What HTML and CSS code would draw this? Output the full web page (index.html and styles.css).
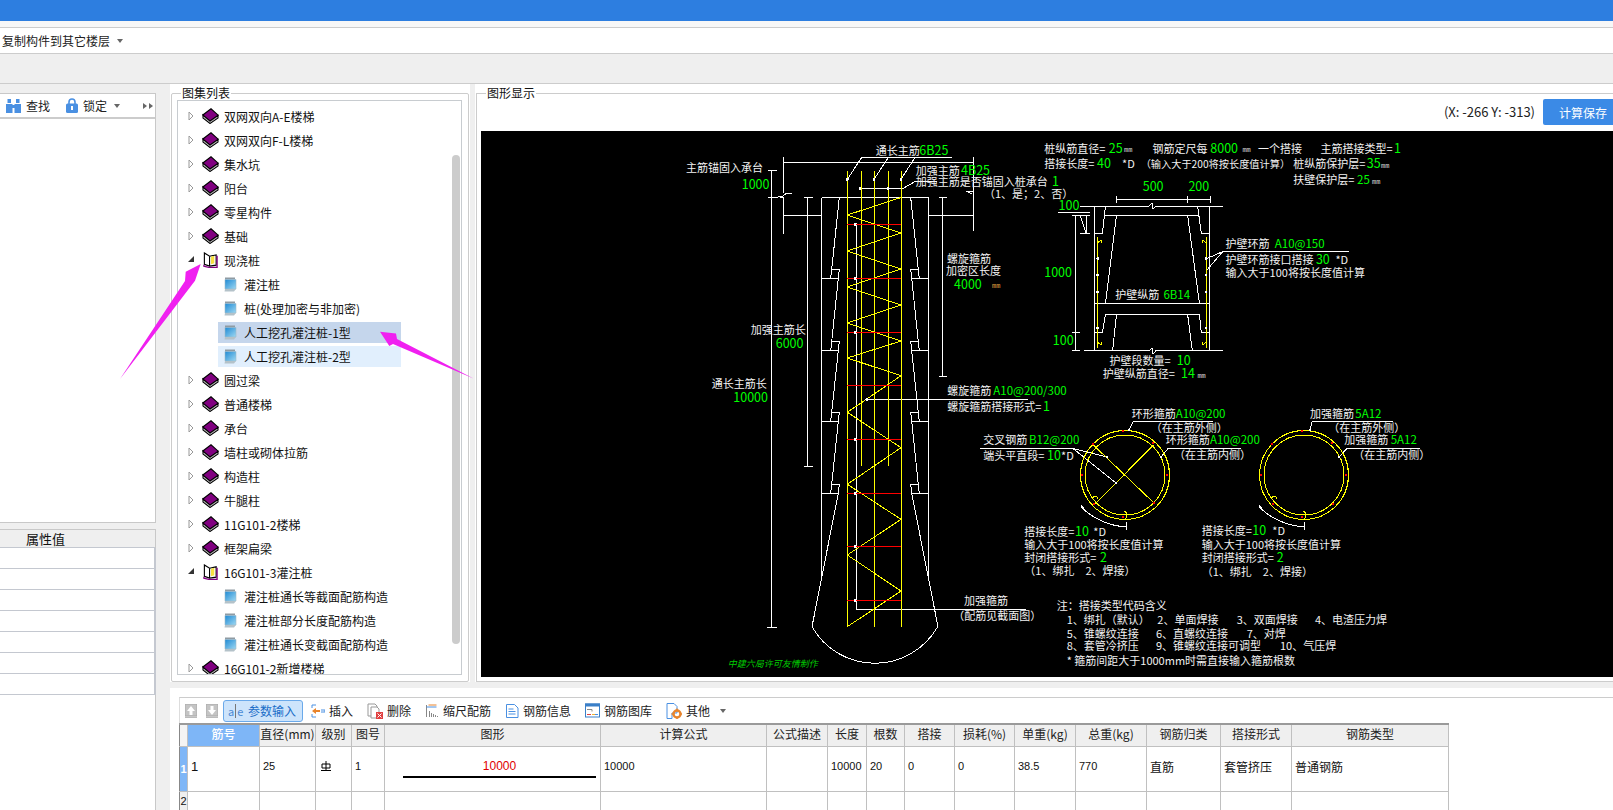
FILE: index.html
```html
<!DOCTYPE html>
<html lang="zh">
<head>
<meta charset="utf-8">
<title>图集</title>
<link rel="stylesheet" href="styles.css">
</head>
<body>
<svg class="defs" width="0" height="0">
  <defs>
    <symbol id="book" viewBox="0 0 17 16">
      <path d="M1 7V10L8 15.500 16 10V7.500L8 13z" fill="#fff" stroke="#000" stroke-width="1.100"/>
      <path d="M.8 7 9 .8l7.200 6.400L8 13z" fill="#800080" stroke="#000" stroke-width="1.100"/>
      <path d="M2.500 9.500 8 14 14.500 9.500" fill="none" stroke="#777" stroke-width=".7"/>
    </symbol>
    <symbol id="openbook" viewBox="0 0 16 17">
      <path d="M1.500 13V1l5.500 3.500L14 3v11l-7 1z" fill="#fff" stroke="#000" stroke-width="1.200"/>
      <path d="M7 4.500V15" stroke="#000" stroke-width="1.200"/>
      <path d="M8.500 5l3.500-1v8l-3.500 1z" fill="#f6e040"/>
      <path d="M1 13.500V15l6 1.500h8V4" fill="none" stroke="#800080" stroke-width="1.400"/>
    </symbol>
    <linearGradient id="noteg" x1="0" y1="0" x2="1" y2="1">
      <stop offset="0" stop-color="#1f8ad4"/>
      <stop offset="1" stop-color="#9ed8f2"/>
    </linearGradient>
    <symbol id="note" viewBox="0 0 13 15">
      <path d="M1 .500h10v2H1z" fill="#8f9ba3"/>
      <path d="M1 2.500h11v9.500H1z" fill="url(#noteg)" stroke="#9fb8c8" stroke-width=".6"/>
      <path d="M1 12l-.5 2.500H10l2-2.500z" fill="#b4c2c9"/>
    </symbol>
  </defs>
</svg>

<div class="titlebar"></div>
<div class="strip"></div>
<div class="toolbar-a">
  <span class="tb-text">复制构件到其它楼层</span><i class="caret"></i>
</div>
<div class="toolbar-b"></div>

<div class="main">
  <aside class="left">
    <section class="left-top">
      <div class="left-tools">
        <svg class="ic15" viewBox="0 0 15 15"><path d="M0 6h6.500v9H0zM8.500 6H15v9H8.500zM1.500 1h3.500v4H1.500zM10 1h3.500v4H10zM6 7h3v3H6z" fill="#4a90e2"/></svg>
        <span class="lt-find">查找</span>
        <svg class="ic-lock" viewBox="0 0 12 15"><path d="M3 6V4a3 3 0 0 1 6 0v2" fill="none" stroke="#4a90e2" stroke-width="1.600"/><rect y="5.500" width="12" height="9.500" rx="1.500" fill="#4a90e2"/><rect x="5" y="8" width="2" height="4" fill="#fff"/></svg>
        <span class="lt-lock">锁定</span><i class="caret caret-l"></i>
        <span class="lt-more"><i class="mini"></i><i class="mini"></i></span>
      </div>
    </section>
    <section class="left-bottom">
      <div class="prop-head"><span>属性值</span></div>
      <div class="prop-rows">
        <div class="prop-row"></div><div class="prop-row"></div><div class="prop-row"></div><div class="prop-row"></div>
        <div class="prop-row"></div><div class="prop-row"></div><div class="prop-row"></div>
      </div>
    </section>
  </aside>

  <div class="work">
    <div class="upper">
      <div class="tree-panel">
        <div class="group">
          <span class="legend">图集列表</span>
          <div class="tree">
            <div class="row"><svg class="tw"><path d="M1 1l4 4-4 4z"/></svg><svg class="bk"><use href="#book"/></svg><span>双网双向A-E楼梯</span></div>
            <div class="row"><svg class="tw"><path d="M1 1l4 4-4 4z"/></svg><svg class="bk"><use href="#book"/></svg><span>双网双向F-L楼梯</span></div>
            <div class="row"><svg class="tw"><path d="M1 1l4 4-4 4z"/></svg><svg class="bk"><use href="#book"/></svg><span>集水坑</span></div>
            <div class="row"><svg class="tw"><path d="M1 1l4 4-4 4z"/></svg><svg class="bk"><use href="#book"/></svg><span>阳台</span></div>
            <div class="row"><svg class="tw"><path d="M1 1l4 4-4 4z"/></svg><svg class="bk"><use href="#book"/></svg><span>零星构件</span></div>
            <div class="row"><svg class="tw"><path d="M1 1l4 4-4 4z"/></svg><svg class="bk"><use href="#book"/></svg><span>基础</span></div>
            <div class="row"><svg class="tw tw-open"><path d="M0 7h6V1z"/></svg><svg class="bk"><use href="#openbook"/></svg><span>现浇桩</span></div>
            <div class="child"><div class="child-in"><svg class="nt"><use href="#note"/></svg><span>灌注桩</span></div></div>
            <div class="child"><div class="child-in"><svg class="nt"><use href="#note"/></svg><span>桩(处理加密与非加密)</span></div></div>
            <div class="child"><div class="child-in sel"><svg class="nt"><use href="#note"/></svg><span>人工挖孔灌注桩-1型</span></div></div>
            <div class="child"><div class="child-in sel2"><svg class="nt"><use href="#note"/></svg><span>人工挖孔灌注桩-2型</span></div></div>
            <div class="row"><svg class="tw"><path d="M1 1l4 4-4 4z"/></svg><svg class="bk"><use href="#book"/></svg><span>圆过梁</span></div>
            <div class="row"><svg class="tw"><path d="M1 1l4 4-4 4z"/></svg><svg class="bk"><use href="#book"/></svg><span>普通楼梯</span></div>
            <div class="row"><svg class="tw"><path d="M1 1l4 4-4 4z"/></svg><svg class="bk"><use href="#book"/></svg><span>承台</span></div>
            <div class="row"><svg class="tw"><path d="M1 1l4 4-4 4z"/></svg><svg class="bk"><use href="#book"/></svg><span>墙柱或砌体拉筋</span></div>
            <div class="row"><svg class="tw"><path d="M1 1l4 4-4 4z"/></svg><svg class="bk"><use href="#book"/></svg><span>构造柱</span></div>
            <div class="row"><svg class="tw"><path d="M1 1l4 4-4 4z"/></svg><svg class="bk"><use href="#book"/></svg><span>牛腿柱</span></div>
            <div class="row"><svg class="tw"><path d="M1 1l4 4-4 4z"/></svg><svg class="bk"><use href="#book"/></svg><span>11G101-2楼梯</span></div>
            <div class="row"><svg class="tw"><path d="M1 1l4 4-4 4z"/></svg><svg class="bk"><use href="#book"/></svg><span>框架扁梁</span></div>
            <div class="row"><svg class="tw tw-open"><path d="M0 7h6V1z"/></svg><svg class="bk"><use href="#openbook"/></svg><span>16G101-3灌注桩</span></div>
            <div class="child"><div class="child-in"><svg class="nt"><use href="#note"/></svg><span>灌注桩通长等截面配筋构造</span></div></div>
            <div class="child"><div class="child-in"><svg class="nt"><use href="#note"/></svg><span>灌注桩部分长度配筋构造</span></div></div>
            <div class="child"><div class="child-in"><svg class="nt"><use href="#note"/></svg><span>灌注桩通长变截面配筋构造</span></div></div>
            <div class="row"><svg class="tw"><path d="M1 1l4 4-4 4z"/></svg><svg class="bk"><use href="#book"/></svg><span>16G101-2新增楼梯</span></div>
            <div class="scroll"></div>
          </div>
        </div>
      </div>

      <div class="draw-panel">
        <div class="group-r">
          <span class="legend">图形显示</span>
          <div class="draw-head">
            <span class="coords">(X: -266 Y: -313)</span>
            <button class="save">计算保存</button>
          </div>
          <svg class="cad" width="1132" height="546" viewBox="481 131 1132 546">
            <!-- pile, white structure -->
            <g id="pileL" class="w">
              <path d="M839.300 197.500 831.700 269.300H839.300L838.300 278.300H830.700L831.700 269.300M821.500 278.300H830.700"/>
              <path d="M838.300 278.300 831.700 341.500H839.300L838.300 350.700H830.700L831.700 341.500M821.500 350.700H830.700"/>
              <path d="M838.300 350.700 831.700 412.300H839.300L838.300 421.300H830.700L831.700 412.300M821.500 421.300H830.700"/>
              <path d="M838.300 421.300 831.700 484.300H839.300L838.300 493.300H830.700L831.700 484.300M821.500 493.300H830.700"/>
              <path d="M838.300 493.300 812 626.700"/>
            </g>
            <use href="#pileL" transform="translate(1750 0) scale(-1 1)"/>
            <g class="w">
              <path d="M812 626.700A72.300 72.300 0 0 0 937.700 626.700"/>
              <path d="M821.500 197.500H928.500M821.500 197.500V577M928.500 197.500V577"/>
              <path d="M783 157V193M783 197V234M973 157V193M973 197V231M783 162.500H973M783 215.500H821.500M928.500 215.500H973"/>
              <path d="M771.700 170V627.300M768 170.500H777M768 197.500H778M767 627.500H777M807.700 197V466M804 197.500H813M804 466.500H813M942.700 197V376M939 197.500H947M939 376.500H947"/>
              <path d="M778 196H783L787 193H792M783 198L778 196M966 191H973V197M966 191L972 194"/>
              <path d="M856.700 223V609.500H1026"/>
              <path d="M861.700 157.500H951.700M861.700 157.500 847.300 179.300M888.300 157.500 874 179.300M915 157.500 901 179.300"/>
              <path d="M860 188.500H903L915 181.500H937M888 188.500V188"/>
              <path d="M866.700 399.500H1028M980 448.500H1073M1133.300 421.700H1213.300M1133.300 421.700 1129 430M1168 448.500H1241M1168 448.500 1161 457M1073 448.500 1107 457M1073 448.500 1116 483"/>
              <path d="M1312 421.700H1393M1312 421.700 1310 430M1347 448.500H1420M1347 448.500 1339 457"/>
              <path d="M1081 507Q1100 525 1126 527M1126 522V530M1259 507Q1278 525 1304 527M1304 522V530M1081 505 1084 509M1259 505 1262 509"/>
              <path d="M1080 206H1149L1152 203 1153 209 1156 206H1222.800M1084 350.700H1149L1152 348 1153 354 1156 350.700H1222.800"/>
              <path d="M1104.800 215H1199.400M1094.600 206V350.700M1209.500 206V350.700"/>
              <path d="M1105.500 206 1102.400 233.300H1094.600M1197.600 206 1201.300 233.300H1209.500"/>
              <path d="M1116.500 215 1105.500 303.300M1187.600 215 1199.400 303.300M1094.600 303.300H1209.500M1104.800 314.300H1199.400"/>
              <path d="M1105.500 314.300 1102.400 332.300H1094.600M1116.500 314.300 1112.600 350.700M1187.600 314.300 1192.300 350.700M1199.400 314.300 1201.300 332.300H1209.500"/>
              <path d="M1075 215V350.700M1072 215.500H1090M1072 332.500H1080M1072 350.700H1080M1057.500 212.500H1090M1080 215 1086 233.300M1086 215V233.500M1080 233.500H1090"/>
              <path d="M1116 199.500H1210M1116 196V203M1187.300 196V203M1210 196V203"/>
              <path d="M1222.800 251.500H1349M1222.800 251.500 1207 258.500M1222.800 251.500 1207 270"/>
            </g>
            <!-- reinforcement -->
            <g class="y">
              <path d="M847.300 171V626.700M861.300 171V465.700M874.300 171V626.700M888.300 171V465.700M901 171V626.700"/>
              <path d="M901 197.500 847.300 215 901 233 847.300 251 901 269 847.300 287 901 305 847.300 323 901 341 847.300 358 901 375.700 847.300 412.300 901 447.700 847.300 484.300 901 519.300 847.300 555 901 591 847.300 626.700"/>
              <circle cx="1125" cy="475" r="44.500"/><circle cx="1125" cy="475" r="40"/>
              <path d="M1093.300 445 1154.300 503.300M1153.300 445 1095 504.300"/>
              <circle cx="1304" cy="475" r="44.500"/><circle cx="1304" cy="475" r="40"/>
              <path d="M1092 498q5-4 6 1M1124 511q5 2 1 9M1271 498q5-4 6 1M1303 511q5 2 1 9"/>
              <path d="M1097.700 236.700V347.700M1206 236.700V347.700M1097.700 243q4-5 4 0M1206 243q-4-5-4 0M1097.700 342q4 5 4 0M1206 342q-4 5-4 0"/>
            </g>
            <path class="r" d="M847 224.500H901M847 278.500H901M847 332.500H901M847 385.500H901M847 439.500H901M847 493.500H901M847 546.500H901M847 600.500H901"/>
            <g class="dw">
              <circle cx="855" cy="224.500" r="1.300"/><circle cx="855" cy="278.500" r="1.300"/><circle cx="855" cy="332.500" r="1.300"/><circle cx="855" cy="439.500" r="1.300"/><circle cx="855" cy="493.500" r="1.300"/><circle cx="855" cy="546.500" r="1.300"/><circle cx="855" cy="600.500" r="1.300"/>
              <circle cx="847.300" cy="179.300" r="1.500"/><circle cx="874" cy="179.300" r="1.500"/><circle cx="901" cy="179.300" r="1.500"/><circle cx="860" cy="188.500" r="1.300"/><circle cx="888" cy="188.500" r="1.300"/><circle cx="866.700" cy="399.500" r="1.500"/>
              <circle cx="1129" cy="430" r="1.400"/><circle cx="1161" cy="457" r="1.400"/><circle cx="1107" cy="457" r="1.400"/><circle cx="1116" cy="483" r="1.400"/><circle cx="1310" cy="430" r="1.400"/><circle cx="1339" cy="457" r="1.400"/>
              <circle cx="1097.700" cy="258.500" r="1.400"/><circle cx="1097.700" cy="275" r="1.400"/><circle cx="1097.700" cy="292" r="1.400"/><circle cx="1097.700" cy="328" r="1.400"/><circle cx="1206" cy="258.500" r="1.400"/><circle cx="1206" cy="275" r="1.400"/><circle cx="1206" cy="292" r="1.400"/><circle cx="1206" cy="328" r="1.400"/>
            </g>
            <g class="dr">
              <circle cx="1123" cy="431" r="1.500"/><circle cx="1153" cy="443" r="1.500"/><circle cx="1167" cy="475" r="1.500"/><circle cx="1154" cy="503" r="1.500"/><circle cx="1123" cy="517" r="1.500"/><circle cx="1094" cy="504" r="1.500"/><circle cx="1082" cy="475" r="1.500"/><circle cx="1093" cy="444" r="1.500"/>
              <circle cx="1302" cy="431" r="1.500"/><circle cx="1332" cy="443" r="1.500"/><circle cx="1346" cy="475" r="1.500"/><circle cx="1333" cy="504" r="1.500"/><circle cx="1302" cy="517" r="1.500"/><circle cx="1273" cy="504" r="1.500"/><circle cx="1261" cy="475" r="1.500"/><circle cx="1272" cy="444" r="1.500"/>
            </g>
            <!-- labels -->
            <g class="t">
              <text x="686" y="172">主筋锚固入承台</text>
              <text x="875.700" y="155">通长主筋</text>
              <text x="915.700" y="174.700">加强主筋</text>
              <text x="915.700" y="186">加强主筋是否锚固入桩承台</text>
              <text x="984" y="198">（1、是；2、否）</text>
              <text x="947" y="263">螺旋箍筋</text>
              <text x="946" y="274.500">加密区长度</text>
              <text x="750.700" y="334">加强主筋长</text>
              <text x="711.700" y="387.500">通长主筋长</text>
              <text x="947.300" y="395">螺旋箍筋</text>
              <text x="947.300" y="411">螺旋箍筋搭接形式=</text>
              <text x="983.300" y="444">交叉钢筋</text>
              <text x="983.300" y="460">端头平直段=</text>
              <text x="1061" y="460">*D</text>
              <text x="1131.700" y="417.700">环形箍筋</text>
              <text x="1150.700" y="431.700">（在主筋外侧）</text>
              <text x="1165.700" y="444.300">环形箍筋</text>
              <text x="1174" y="459">（在主筋内侧）</text>
              <text x="1024.300" y="536">搭接长度=</text>
              <text x="1093.300" y="536">*D</text>
              <text x="1024.300" y="548.700">输入大于100将按长度值计算</text>
              <text x="1024.300" y="562.300">封闭搭接形式=</text>
              <text x="1024.300" y="575">（1、绑扎　2、焊接）</text>
              <text x="1310" y="417.700">加强箍筋</text>
              <text x="1328.300" y="431.700">（在主筋外侧）</text>
              <text x="1344.300" y="444.300">加强箍筋</text>
              <text x="1353.300" y="459">（在主筋内侧）</text>
              <text x="1201.700" y="535">搭接长度=</text>
              <text x="1272.300" y="535">*D</text>
              <text x="1201.700" y="548.700">输入大于100将按长度值计算</text>
              <text x="1201.700" y="562.300">封闭搭接形式=</text>
              <text x="1201.700" y="576">（1、绑扎　2、焊接）</text>
              <text x="964" y="605">加强箍筋</text>
              <text x="953.300" y="620">（配筋见截面图）</text>
              <text x="1056.700" y="610">注：搭接类型代码含义</text>
              <text x="1066.700" y="624">1、绑扎（默认）</text>
              <text x="1157.300" y="624">2、单面焊接</text>
              <text x="1236.700" y="624">3、双面焊接</text>
              <text x="1315" y="624">4、电渣压力焊</text>
              <text x="1066.700" y="638.300">5、锥螺纹连接</text>
              <text x="1156" y="638.300">6、直螺纹连接</text>
              <text x="1246.700" y="638.300">7、对焊</text>
              <text x="1066.700" y="650">8、套管冷挤压</text>
              <text x="1156" y="650">9、锥螺纹连接可调型</text>
              <text x="1280" y="650">10、气压焊</text>
              <text x="1066.700" y="665">* 箍筋间距大于1000mm时需直接输入箍筋根数</text>
              <text x="1044.200" y="152.700">桩纵筋直径=</text>
              <text x="1152.500" y="152.700">钢筋定尺每</text>
              <text x="1258" y="152.700">一个搭接</text>
              <text x="1320.600" y="152.700">主筋搭接类型=</text>
              <text x="1044.200" y="168.300">搭接长度=</text>
              <text x="1122" y="168.300">*D</text>
              <text class="tight" x="1140.700" y="168.300">（输入大于200将按长度值计算）</text>
              <text x="1293.200" y="168.300">桩纵筋保护层=</text>
              <text x="1293.200" y="184.300">扶壁保护层=</text>
              <text x="1225.600" y="248.300">护壁环筋</text>
              <text x="1225.600" y="264">护壁环筋接口搭接</text>
              <text x="1335.400" y="264">*D</text>
              <text x="1225.600" y="276.700">输入大于100将按长度值计算</text>
              <text x="1115.300" y="299">护壁纵筋</text>
              <text x="1109.500" y="365">护壁段数量=</text>
              <text x="1102.800" y="378.300">护壁纵筋直径=</text>
            </g>
            <g class="g">
              <text x="741.700" y="189">1000</text>
              <text x="919.300" y="155">6B25</text>
              <text x="961" y="174.700">4B25</text>
              <text x="1052" y="185.700">1</text>
              <text x="954" y="289">4000</text>
              <text x="775.700" y="347.700">6000</text>
              <text x="733.300" y="401.700">10000</text>
              <text class="gs" x="993.300" y="395">A10@200/300</text>
              <text x="1043" y="411">1</text>
              <text class="gs" x="1029" y="444">B12@200</text>
              <text x="1047" y="460">10</text>
              <text class="gs" x="1175.700" y="417.700">A10@200</text>
              <text class="gs" x="1210" y="444.300">A10@200</text>
              <text x="1075" y="536">10</text>
              <text x="1100" y="562.300">2</text>
              <text class="gs" x="1355.300" y="417.700">5A12</text>
              <text class="gs" x="1390.700" y="444.300">5A12</text>
              <text x="1252.300" y="535">10</text>
              <text x="1276.700" y="562.300">2</text>
              <text x="1108.700" y="152.700">25</text>
              <text x="1210.300" y="152.700">8000</text>
              <text x="1394" y="152.700">1</text>
              <text x="1097" y="168.300">40</text>
              <text x="1366.700" y="168.300">35</text>
              <text class="gs" x="1357" y="184.300">25</text>
              <text x="1142.700" y="191">500</text>
              <text x="1188.400" y="191">200</text>
              <text x="1058.600" y="210">100</text>
              <text x="1044.200" y="276.700">1000</text>
              <text x="1052.800" y="345">100</text>
              <text class="gs" x="1274.800" y="248.300">A10@150</text>
              <text x="1315.900" y="264">30</text>
              <text class="gs" x="1163.400" y="299">6B14</text>
              <text x="1176.700" y="365">10</text>
              <text x="1181" y="378.300">14</text>
            </g>
            <g class="m">
              <text class="tan" x="992" y="288">mm</text>
              <text x="1124" y="152">mm</text>
              <text x="1242.400" y="152">mm</text>
              <text x="1381" y="168">mm</text>
              <text x="1372" y="184">mm</text>
              <text x="1197.400" y="378">mm</text>
            </g>
            <text class="credit" x="727.700" y="666.700">中建六局许可友情制作</text>
          </svg>
        </div>
      </div>
    </div>

    <div class="lower">
      <div class="bar">
        <span class="nav"><svg class="ic12" viewBox="0 0 12 14"><rect width="12" height="12" fill="#c4c4c4" stroke="#aaa"/><path d="M6 2 2 7h2.500v4h3V7H10z" fill="#fff"/><rect y="12.500" width="12" height="1.500" fill="#bbb"/></svg></span>
        <span class="nav"><svg class="ic12" viewBox="0 0 12 14"><rect width="12" height="12" fill="#c4c4c4" stroke="#aaa"/><path d="M6 11 2 6h2.500V2h3v4H10z" fill="#fff"/><rect y="12.500" width="12" height="1.500" fill="#bbb"/></svg></span>
        <span class="btn btn-on"><span class="ae">a<i class="ibeam"></i>e</span>参数输入</span>
        <span class="btn"><svg class="ic14" viewBox="0 0 14 14"><path d="M1 7l4-3v2h4v2H5v2z" fill="#e8842c"/><path d="M5 1H1M5 13H1M1 1v3M1 10v3M10 6h4v2h-4" fill="none" stroke="#4a90e2"/></svg>插入</span>
        <span class="btn"><svg class="ic16" viewBox="0 0 16 16"><path d="M1 1h7l2 2v10H1z" fill="#fff" stroke="#999"/><path d="M4 4h6l2 2v9H4z" fill="#fff" stroke="#999"/><rect x="9" y="9" width="7" height="7" fill="#e04040"/><path d="M10.500 10.500l4 4m0-4l-4 4" stroke="#fff"/></svg>删除</span>
        <span class="btn"><svg class="ic14" viewBox="0 0 13 14"><path d="M1 1v12M4 7v6M6 9v4M8 10v3M10 11v2M12 12v1" stroke="#888"/><path d="M3 1h8" stroke="#e8842c"/><path d="M1 3h10" stroke="#4a90e2"/></svg>缩尺配筋</span>
        <span class="btn"><svg class="ic14" viewBox="0 0 13 14"><path d="M1 .500h8l3.500 3.500v9.500H1z" fill="#fff" stroke="#4a90e2"/><path d="M3 5h5M3 7.500h7M3 10h7" stroke="#4a90e2"/></svg>钢筋信息</span>
        <span class="btn"><svg class="ic15" viewBox="0 0 15 14"><rect x=".5" y=".5" width="14" height="13" fill="#fff" stroke="#3a7fc8"/><rect width="15" height="3" fill="#3a7fc8"/><path d="M2 6h5v2" fill="none" stroke="#888"/><path d="M2 11h4" stroke="#e04040"/><path d="M7 11h3" stroke="#f0b030"/><path d="M10 11h3" stroke="#4a90e2"/></svg>钢筋图库</span>
        <span class="btn"><svg class="ic16" viewBox="0 0 16 16"><path d="M1 .500h7l3 3V10H6v5.500H1z" fill="#fff" stroke="#4a90e2"/><circle cx="11" cy="11" r="3.500" fill="none" stroke="#e8842c" stroke-width="2.400"/><path d="M11 5.500v2M11 14.500v1.500M5.500 11h2M14.500 11H16" stroke="#e8842c" stroke-width="1.500"/></svg>其他<i class="caret caret-o"></i></span>
      </div>
      <table class="grid">
        <colgroup>
          <col class="c8"><col class="c72"><col class="c56"><col class="c36"><col class="c33"><col class="c216"><col class="c166"><col class="c61"><col class="c39"><col class="c38"><col class="c50"><col class="c60"><col class="c61"><col class="c71"><col class="c74"><col class="c71"><col class="c157">
        </colgroup>
        <thead>
          <tr>
            <th class="corner"></th><th class="active">筋号</th><th>直径(mm)</th><th>级别</th><th>图号</th><th>图形</th><th>计算公式</th><th>公式描述</th><th>长度</th><th>根数</th><th>搭接</th><th>损耗(%)</th><th>单重(kg)</th><th>总重(kg)</th><th>钢筋归类</th><th>搭接形式</th><th>钢筋类型</th>
          </tr>
        </thead>
        <tbody>
          <tr class="tall">
            <td class="rh on">1</td><td class="big">1</td><td>25</td>
            <td><svg class="grade" viewBox="0 0 10 10"><path d="M1 3h8v4H1zM5 0v10M0 9.500h10" fill="none" stroke="#000"/></svg></td>
            <td>1</td>
            <td class="shape"><span class="shape-num">10000</span><span class="shape-bar"></span></td>
            <td>10000</td><td></td><td>10000</td><td>20</td><td>0</td><td>0</td><td>38.5</td><td>770</td>
            <td class="cn">直筋</td><td class="cn">套管挤压</td><td class="cn">普通钢筋</td>
          </tr>
          <tr>
            <td class="rh">2</td><td></td><td></td><td></td><td></td><td></td><td></td><td></td><td></td><td></td><td></td><td></td><td></td><td></td><td></td><td></td><td></td>
          </tr>
        </tbody>
      </table>
    </div>
  </div>
</div>

<svg class="arrows" width="1613" height="810" viewBox="0 0 1613 810">
  <path d="M200.700 264 185.700 271.700 185 281 120 379 191 286 195 280.700z"/>
  <path d="M380 331.700 396 333.500 397 339 473.500 378.500 393 344 389.300 346z"/>
</svg>
</body>
</html>
```

FILE: styles.css
```css
* { box-sizing: border-box; }
html, body { margin: 0; padding: 0; }
body {
  width: 1613px;
  height: 810px;
  overflow: hidden;
  position: relative;
  background: #efefef;
  font-family: "Noto Sans CJK SC", "Noto Sans", sans-serif;
  font-size: 12px;
  color: #222;
}
.defs { position: absolute; }

.titlebar { height: 21px; background: #2d7ee0; }
.strip { height: 7px; background: #f7f7f7; border-bottom: 1px solid #ccc; }
.toolbar-a {
  height: 26px;
  background: #fff;
  border-bottom: 1px solid #ccc;
  display: flex;
  align-items: center;
  padding-left: 2px;
}
.toolbar-b { height: 30px; background: #efefef; border-bottom: 1px solid #ccc; }
.caret {
  display: inline-block;
  width: 0;
  height: 0;
  border-left: 3.5px solid transparent;
  border-right: 3.5px solid transparent;
  border-top: 4px solid #666;
  margin-left: 7px;
}

.main { display: flex; height: 726px; }

/* left column */
.left { width: 156px; padding-top: 9px; display: flex; flex-direction: column; gap: 6px; }
.left-top {
  height: 430px;
  background: #fff;
  border-top: 1px solid #c8c8c8;
  border-right: 1px solid #c8c8c8;
  border-bottom: 1px solid #c8c8c8;
}
.left-tools {
  height: 25px;
  border-bottom: 2px solid #ccc;
  display: flex;
  align-items: center;
  padding-left: 6px;
  font-size: 12px;
  white-space: nowrap;
}
.ic15 { width: 15px; height: 15px; flex: none; }
.ic-lock { width: 12px; height: 15px; margin-left: 16px; flex: none; }
.lt-find { margin-left: 5px; flex: none; }
.lt-lock { margin-left: 5px; flex: none; }
.caret-l { margin-left: 7px; flex: none; }
.lt-more { margin-left: 23px; display: flex; gap: 2px; flex: none; }
.mini {
  width: 0;
  height: 0;
  border-top: 3px solid transparent;
  border-bottom: 3px solid transparent;
  border-left: 4px solid #666;
}
.left-bottom { flex: 1; background: #fff; border-right: 1px solid #c8c8c8; }
.prop-head {
  height: 19px;
  background: #efefef;
  border-top: 1px solid #c8c8c8;
  border-bottom: 1px solid #c4c8d0;
  padding-left: 26px;
  font-size: 13px;
  line-height: 18px;
  color: #111;
}
.prop-rows { border-right: 2px solid #c4c8d0; margin-right: -1px; }
.prop-row { height: 21px; border-bottom: 1px solid #c4c8d0; }

/* work area */
.work { margin-left: 14px; flex: 1; display: flex; flex-direction: column; gap: 6px; min-width: 0; }
.upper { height: 598px; display: flex; gap: 5px; }

.tree-panel { width: 300px; background: #fff; padding: 9px 1px 0 1px; }
.group {
  position: relative;
  height: 589px;
  border: 1px solid #ccc;
  border-radius: 2px;
  padding: 6px 6px 6px 5px;
}
.legend {
  position: absolute;
  top: -9px;
  left: 9px;
  padding: 0 1px;
  background: #fff;
  font-size: 12px;
  line-height: 16px;
  color: #111;
}
.tree {
  position: relative;
  height: 100%;
  border: 1px solid #c8ccd0;
  padding-top: 3px;
  overflow: hidden;
  color: #111;
}
.row { height: 24px; display: flex; align-items: center; padding-left: 10px; white-space: nowrap; }
.tw { width: 6px; height: 10px; margin-right: 8px; flex: none; }
.tw path { fill: #fff; stroke: #999; }
.tw-open path { fill: #333; stroke: none; }
.bk { width: 17px; height: 16px; margin-right: 5px; flex: none; }
.child { height: 24px; display: flex; align-items: center; padding-left: 40px; }
.child-in {
  width: 183px;
  height: 21px;
  display: flex;
  align-items: center;
  gap: 7px;
  padding-left: 6px;
  white-space: nowrap;
}
.nt { width: 13px; height: 15px; flex: none; }
.sel { background: #c5d6ec; }
.sel2 { background: #e1effd; }
.scroll {
  position: absolute;
  left: 274px;
  top: 54px;
  width: 8px;
  height: 489px;
  border-radius: 4px;
  background: #ccc;
}

.draw-panel { flex: 1; background: #fff; padding: 9px 0 0 1px; min-width: 0; }
.group-r {
  position: relative;
  height: 589px;
  border: 1px solid #ccc;
  border-right: 0;
  padding-left: 4px;
}
.draw-head {
  height: 37px;
  display: flex;
  justify-content: flex-end;
  align-items: flex-start;
  padding-top: 5px;
}
.coords { font-size: 13px; line-height: 26px; margin-right: 8px; color: #222; }
.save {
  width: 70px;
  height: 26px;
  border: 0;
  border-radius: 2px 0 0 2px;
  background: #3b8ae6;
  color: #fff;
  font: 12px "Noto Sans CJK SC", sans-serif;
  text-align: left;
  padding: 0 0 0 16px;
}
.cad { display: block; background: #000; }
.cad path, .cad circle { shape-rendering: crispEdges; }
.w { fill: none; stroke: #fff; stroke-width: 1; }
.y { fill: none; stroke: #ff0; stroke-width: 1; }
.r { fill: none; stroke: #f00; stroke-width: 1; }
.dw circle { fill: #fff; }
.dr circle { fill: #f00; }
.t text { font: 11px "Noto Sans CJK SC", sans-serif; fill: #f2f2f2; }
.t text.tight { font-size: 10.2px; }
.g text { font: 12.5px "Noto Sans CJK SC", sans-serif; fill: #0f0; }
.g text.gs { font-size: 11.5px; }
.m text { font: 7px "Liberation Mono", monospace; fill: #d8d8d8; }
.m text.tan { fill: #e0a040; }
.credit { font: italic 9px "Noto Sans CJK SC", sans-serif; fill: #0c0; }

/* bottom panel */
.lower { flex: 1; background: #fff; padding: 9px 0 0 9px; min-height: 0; overflow: hidden; }
.bar {
  height: 26px;
  border-top: 1px solid #ccc;
  border-left: 1px solid #ddd;
  display: flex;
  align-items: center;
  padding-left: 5px;
}
.nav { width: 21px; display: flex; }
.ic12 { width: 12px; height: 14px; }
.ic14 { width: 14px; height: 14px; flex: none; }
.ic16 { width: 16px; height: 16px; flex: none; }
.btn { display: flex; align-items: center; gap: 4px; margin-right: 14px; white-space: nowrap; color: #222; }
.btn-on {
  height: 22px;
  margin-left: -4px;
  margin-right: 8px;
  padding: 0 6px 0 4px;
  gap: 5px;
  background: #cde4fb;
  border: 1px solid #6aa9ea;
  border-radius: 3px;
  color: #1a6dc8;
}
.ae { display: flex; align-items: center; width: 15px; font-size: 11px; color: #4a8ad4; }
.ibeam { display: block; flex: none; width: 1px; height: 14px; background: #777; margin: 0 1px; }
.caret-o { margin-left: 6px; }

.grid {
  table-layout: fixed;
  width: 1269px;
  border-collapse: collapse;
  font-size: 12px;
}
.c8 { width: 8px; } .c72 { width: 72px; } .c56 { width: 56px; } .c36 { width: 36px; }
.c33 { width: 33px; } .c216 { width: 216px; } .c166 { width: 166px; } .c61 { width: 61px; }
.c39 { width: 39px; } .c38 { width: 38px; } .c50 { width: 50px; } .c60 { width: 60px; }
.c71 { width: 71px; } .c74 { width: 74px; } .c157 { width: 157px; }
.grid th {
  height: 22px;
  padding: 0 0 3px;
  background: #efefef;
  border: 1px solid #c0c0c0;
  border-top: 2px solid #9a9a9a;
  font-weight: 400;
  line-height: 16px;
  color: #222;
  white-space: nowrap;
  overflow: hidden;
}
.grid th.corner { background: #f4f4f4; border-left: 1px solid #888; }
.grid th.active { background: #7eb6f7; color: #fff; font-weight: 500; }
.grid td {
  height: 20px;
  padding: 0 0 5px 3px;
  border: 1px solid #c0c0c0;
  font-family: "Liberation Sans", sans-serif;
  font-size: 11px;
  color: #111;
  white-space: nowrap;
  overflow: hidden;
}
.grid .tall td { height: 45px; }
.grid td.rh {
  padding: 0;
  background: #efefef;
  border-left: 1px solid #888;
  text-align: center;
  font-size: 11px;
}
.grid td.on { background: #7eb6f7; color: #fff; font-weight: 700; }
.grid td.big { font-size: 13px; }
.grid td.cn { font-family: "Noto Sans CJK SC", sans-serif; font-size: 12px; }
.grade { width: 10px; height: 10px; display: block; margin-left: 2px; }
.grid td.shape { padding: 0 4px 0 18px; text-align: center; vertical-align: top; }
.shape-num {
  display: block;
  margin-top: 11px;
  height: 16px;
  line-height: 16px;
  color: #e00000;
  font-size: 12px;
}
.shape-bar { display: block; height: 2px; margin-top: 2px; background: #000; }

.arrows { position: absolute; left: 0; top: 0; pointer-events: none; }
.arrows path { fill: #f020f0; }
```
